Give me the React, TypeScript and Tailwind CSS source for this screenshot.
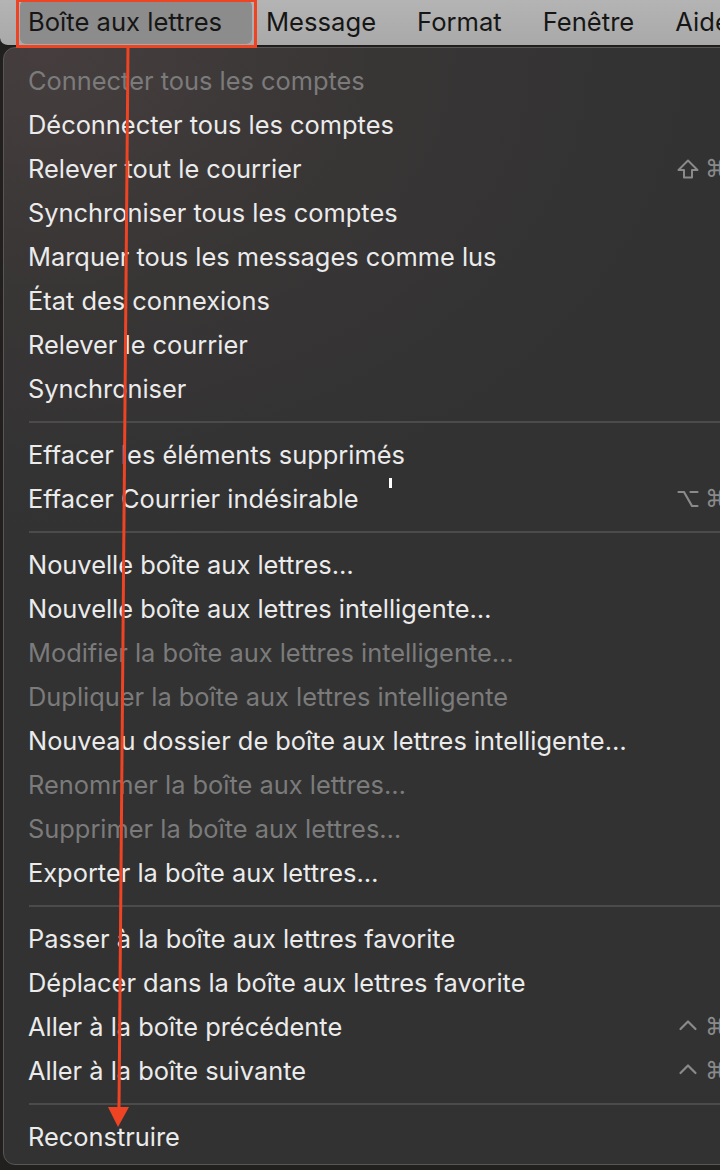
import React from 'react'

type Mod = 'shift' | 'option' | 'control'
type Item = { label: string; disabled?: boolean; mod?: Mod } | 'sep'

const items: Item[] = [
  { label: 'Connecter tous les comptes', disabled: true },
  { label: 'Déconnecter tous les comptes' },
  { label: 'Relever tout le courrier', mod: 'shift' },
  { label: 'Synchroniser tous les comptes' },
  { label: 'Marquer tous les messages comme lus' },
  { label: 'État des connexions' },
  { label: 'Relever le courrier' },
  { label: 'Synchroniser' },
  'sep',
  { label: 'Effacer les éléments supprimés' },
  { label: 'Effacer Courrier indésirable', mod: 'option' },
  'sep',
  { label: 'Nouvelle boîte aux lettres…' },
  { label: 'Nouvelle boîte aux lettres intelligente…' },
  { label: 'Modifier la boîte aux lettres intelligente…', disabled: true },
  { label: 'Dupliquer la boîte aux lettres intelligente', disabled: true },
  { label: 'Nouveau dossier de boîte aux lettres intelligente…' },
  { label: 'Renommer la boîte aux lettres…', disabled: true },
  { label: 'Supprimer la boîte aux lettres…', disabled: true },
  { label: 'Exporter la boîte aux lettres…' },
  'sep',
  { label: 'Passer à la boîte aux lettres favorite' },
  { label: 'Déplacer dans la boîte aux lettres favorite' },
  { label: 'Aller à la boîte précédente', mod: 'control' },
  { label: 'Aller à la boîte suivante', mod: 'control' },
  'sep',
  { label: 'Reconstruire' },
]

const menus = ['Message', 'Format', 'Fenêtre', 'Aide']

function ModIcon({ mod }: { mod: Mod }) {
  if (mod === 'shift')
    return (
      <svg width="22" height="20" viewBox="0 0 22 20" fill="none" stroke="#8a8a8a" strokeWidth="2" strokeLinejoin="round">
        <path d="M11 1.5 L20.5 11 H15 V18.5 H7 V11 H1.5 Z" />
      </svg>
    )
  if (mod === 'option')
    return (
      <svg width="22" height="20" viewBox="0 0 22 20" fill="none" stroke="#8a8a8a" strokeWidth="2.2" strokeLinecap="round">
        <path d="M1.5 3 H7 L15 17 H20.5" />
        <path d="M13.5 3 H20.5" />
      </svg>
    )
  return (
    <svg width="22" height="20" viewBox="0 0 22 20" fill="none" stroke="#8a8a8a" strokeWidth="2.2" strokeLinecap="round" strokeLinejoin="round">
      <path d="M3.5 12 L11 4.5 L18.5 12" />
    </svg>
  )
}

export default function App() {
  return (
    <div className="relative w-[720px] h-[1170px] overflow-hidden bg-[#221f1f] font-['Inter','Liberation_Sans',sans-serif]">
      {/* menu bar */}
      <div className="h-[46px] flex items-center bg-[linear-gradient(180deg,#b4b4b4,#a9a9a9)] border-b border-[#1c1c1c] rounded-bl-lg text-[25.6px] text-[#161616] whitespace-nowrap">
        <div className="ml-[20px] h-[44px] w-[232px] shrink-0 self-start rounded-md bg-[#8c8c8c] flex items-center pl-[8px]">
          Boîte aux lettres
        </div>
        <div className="flex gap-[41px] ml-[14px]">
          {menus.map(m => (
            <span key={m}>{m}</span>
          ))}
        </div>
      </div>

      {/* menu panel */}
      <div className="ml-[3px] mt-px w-[760px] h-[1118px] rounded-xl border border-[#5a5656] bg-[radial-gradient(ellipse_90%_45%_at_5%_0%,#463e3e_0%,#383535_50%,#323232_100%)] pt-[11px] pb-[6px]">
        {items.map((it, i) =>
          it === 'sep' ? (
            <div key={i} className="h-[22px] flex items-center pl-[25px]">
              <div className="h-[2px] w-full bg-[#4b4b4b]" />
            </div>
          ) : (
            <div key={i} className={`h-[44px] flex items-center pl-[24px] pr-[5px] text-[25.4px] whitespace-nowrap ${it.disabled ? 'text-[#7b7b7b]' : 'text-[#ebebeb]'}`}>
              <span className="flex-1">{it.label}</span>
              {it.mod && (
                <span className="w-[80px] flex items-center gap-[6px] text-[#8a8a8a] text-[24px] font-['DejaVu_Sans',sans-serif]">
                  <ModIcon mod={it.mod} />
                  <span>⌘</span>
                </span>
              )}
            </div>
          )
        )}
      </div>

      {/* text cursor */}
      <div className="absolute left-[389px] top-[478px] w-[3px] h-[10px] bg-white" />

      {/* annotation */}
      <div className="absolute left-[16px] top-[-1px] w-[241px] h-[49px] border-[3px] border-[#ee4424]" />
      <svg className="absolute left-0 top-0" width="720" height="1170">
        <line x1="128" y1="47" x2="119" y2="1108" stroke="#ee4424" strokeWidth="3" />
        <polygon points="108,1107 129,1107 118,1127" fill="#ee4424" />
      </svg>
    </div>
  )
}
